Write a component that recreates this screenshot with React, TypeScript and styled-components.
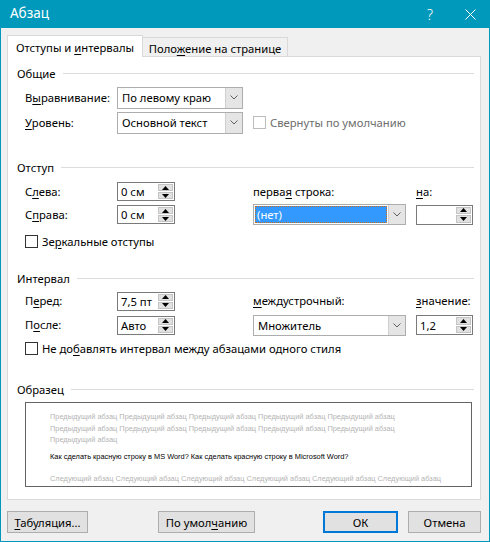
import React from 'react';
import styled, { createGlobalStyle } from 'styled-components';

const ACCENT = '#0099bc';

const Global = createGlobalStyle`
  html, body { margin: 0; padding: 0; background: #f0f0f0; }
  body {
    font-family: "Noto Sans", "Segoe UI", sans-serif;
    font-size: 11.25px;
    color: #000;
  }
  * { box-sizing: border-box; }
`;

/* ---------- window chrome ---------- */

const Window = styled.div`
  width: 490px;
  height: 542px;
  border: 1px solid ${ACCENT};
  border-top: none;
  background: #f0f0f0;
  display: flex;
  flex-direction: column;
`;

const TitleBar = styled.div`
  height: 28px;
  flex: none;
  background: ${ACCENT};
  color: #fff;
  display: flex;
  align-items: center;
  padding-left: 9px;
`;

const Title = styled.span`
  flex: 1;
  font-size: 13.5px;
  line-height: 1;
  padding-bottom: 1px;
`;

const CaptionButton = styled.span<{ $w: number }>`
  width: ${p => p.$w}px;
  height: 100%;
  display: flex;
  align-items: center;
  justify-content: center;
  color: #fff;
  font-size: 14px;
  font-weight: 300;
`;

/* ---------- tabs ---------- */

const TabStrip = styled.div`
  height: 28px;
  flex: none;
  display: flex;
  align-items: flex-end;
  padding-left: 6px;
`;

const Tab = styled.div<{ $active?: boolean; $w: number }>`
  position: relative;
  width: ${p => p.$w}px;
  height: ${p => (p.$active ? 22 : 19)}px;
  margin-bottom: ${p => (p.$active ? -1 : 0)}px;
  margin-left: ${p => (p.$active ? 0 : -1)}px;
  z-index: ${p => (p.$active ? 1 : 0)};
  background: ${p => (p.$active ? '#fff' : '#f0f0f0')};
  border: 1px solid #d9d9d9;
  border-bottom: none;
  display: flex;
  align-items: center;
  justify-content: center;
  padding-top: ${p => (p.$active ? 1 : 2)}px;
`;

const Text = styled.span`
  white-space: nowrap;
`;

const Panel = styled.div`
  margin: 0 8px 0 6px;
  height: 444px;
  flex: none;
  background: #fff;
  border: 1px solid #d9d9d9;
  padding: 8px 6px 0 9px;
`;

/* ---------- groups ---------- */

const GroupHeader = styled.div<{ $gap: number }>`
  display: flex;
  align-items: center;
  height: 16px;
  margin-top: ${p => p.$gap}px;
  white-space: nowrap;

  &::after {
    content: '';
    flex: 1;
    height: 1px;
    margin-left: 7px;
    background: #dcdcdc;
  }
`;

const Key = styled.span`
  text-decoration: underline;
  text-underline-offset: 2px;
  text-decoration-thickness: 1px;
`;

const GeneralGrid = styled.div`
  display: grid;
  grid-template-columns: 92px 126px 10px auto;
  grid-template-areas:
    "l1 c1 . ."
    "l2 c2 . x";
  grid-auto-rows: 25px;
  align-items: center;
  margin: 4px 0 0 8px;
`;

const FieldGrid = styled.div<{ $row: number; $gap: number }>`
  display: grid;
  grid-template-columns: 92px 58px 78px 153px 10px 57px;
  grid-template-areas:
    "l1 s1 . h1 . h2"
    "l2 s2 . c1 . c2";
  grid-auto-rows: ${p => p.$row}px;
  align-items: center;
  margin: ${p => p.$gap}px 0 0 8px;
`;

const Label = styled.span<{ $area: string }>`
  grid-area: ${p => p.$area};
  white-space: nowrap;
  line-height: 16px;
`;

const Slot = styled.div<{ $area: string }>`
  grid-area: ${p => p.$area};
  display: flex;
  align-items: center;
`;

/* ---------- combo box ---------- */

const Combo = styled.div<{ $w: number; $h: number }>`
  width: ${p => p.$w}px;
  height: ${p => p.$h}px;
  border: 1px solid #adadad;
  background: #fff;
  display: flex;
`;

const ComboValue = styled.span<{ $selected?: boolean }>`
  flex: 1;
  display: flex;
  align-items: center;
  padding-left: ${p => (p.$selected ? 2 : 4)}px;
  margin: ${p => (p.$selected ? '1px' : '0')};
  background: ${p => (p.$selected ? '#3399ff' : 'transparent')};
  color: ${p => (p.$selected ? '#fff' : '#000')};
  outline: ${p => (p.$selected ? '1px dotted #c46a1c' : 'none')};
  outline-offset: -1px;
  white-space: nowrap;
`;

const DropButton = styled.span`
  width: 17px;
  flex: none;
  background: #e5e5e5;
  border-left: 1px solid #cfcfcf;
  display: flex;
  align-items: center;
  justify-content: center;
`;

const Chevron = () => (
  <svg width="8" height="5" viewBox="0 0 8 5">
    <path d="M0.5 0.5 L4 4 L7.5 0.5" fill="none" stroke="#606060" strokeWidth="1" />
  </svg>
);

/* ---------- spin box ---------- */

const Spin = styled.div<{ $w: number; $h: number }>`
  width: ${p => p.$w}px;
  height: ${p => p.$h}px;
  border: 1px solid #7a7a7a;
  background: #fff;
  display: flex;
`;

const SpinValue = styled.span`
  flex: 1;
  display: flex;
  align-items: center;
  padding-left: 3px;
  white-space: nowrap;
`;

const SpinButtons = styled.div`
  width: 16px;
  flex: none;
  display: flex;
  flex-direction: column;
  gap: 1px;
  padding: 1px 1px 1px 0;
`;

const SpinArrow = styled.span`
  flex: 1;
  background: #e1e1e1;
  border: 1px solid #c4c4c4;
  display: flex;
  align-items: center;
  justify-content: center;
`;

const Triangle = ({ up }: { up?: boolean }) => (
  <svg width="7" height="4" viewBox="0 0 7 4">
    <path d={up ? 'M0 4 L3.5 0 L7 4 Z' : 'M0 0 L3.5 4 L7 0 Z'} fill="#000" />
  </svg>
);

const SpinBox = ({ value, w = 58, h = 19 }: { value: string; w?: number; h?: number }) => (
  <Spin $w={w} $h={h}>
    <SpinValue>{value}</SpinValue>
    <SpinButtons>
      <SpinArrow><Triangle up /></SpinArrow>
      <SpinArrow><Triangle /></SpinArrow>
    </SpinButtons>
  </Spin>
);

/* ---------- check box ---------- */

const CheckRow = styled.label<{ $gap: number; $disabled?: boolean }>`
  display: flex;
  align-items: center;
  gap: 4px;
  height: 16px;
  margin-top: ${p => p.$gap}px;
  color: ${p => (p.$disabled ? '#6d6d6d' : '#000')};
`;

const Box = styled.span<{ $disabled?: boolean }>`
  width: 13px;
  height: 13px;
  flex: none;
  background: #fff;
  border: 1px solid ${p => (p.$disabled ? '#bcbcbc' : '#333')};
`;

const IndentedCheck = styled(CheckRow)`
  margin-left: 8px;
`;

/* ---------- preview ---------- */

const Preview = styled.div`
  margin: 5px 0 0 8px;
  width: 447px;
  height: 85px;
  border: 1px solid #646464;
  overflow: hidden;
  padding: 8px 0 0 24px;
  font-family: "Liberation Sans", Arial, sans-serif;
  font-size: 7.4px;
`;

const PreviewPara = styled.div<{ $current?: boolean; $after: number }>`
  color: ${p => (p.$current ? '#000' : '#b4b4b4')};
  line-height: 11.5px;
  margin-bottom: ${p => p.$after}px;
  white-space: nowrap;
`;

/* ---------- footer ---------- */

const Footer = styled.div`
  display: flex;
  align-items: center;
  margin-top: 11px;
  padding: 0 8px 0 6px;
`;

const Button = styled.button<{ $w: number; $default?: boolean; $gap?: number }>`
  width: ${p => p.$w}px;
  height: 22px;
  margin-left: ${p => p.$gap ?? 0}px;
  background: #e1e1e1;
  border: ${p => (p.$default ? '2px solid #0078d7' : '1px solid #adadad')};
  font: inherit;
  color: #000;
  padding: 0;
  display: flex;
  align-items: center;
  justify-content: center;
`;

const Spacer = styled.span`
  flex: 1;
`;

const repeat = (s: string, n: number) => Array.from({ length: n }, () => s).join(' ');

export default function App() {
  return (
    <>
      <Global />
      <Window>
        <TitleBar>
          <Title>Абзац</Title>
          <CaptionButton $w={42}>?</CaptionButton>
          <CaptionButton $w={38}>
            <svg width="11" height="11" viewBox="0 0 11 11">
              <path d="M0.5 0.5 L10.5 10.5 M10.5 0.5 L0.5 10.5" stroke="#fff" strokeWidth="1" />
            </svg>
          </CaptionButton>
        </TitleBar>

        <TabStrip>
          <Tab $active $w={136}><Text>Отступы и <Key>и</Key>нтервалы</Text></Tab>
          <Tab $w={146}><Text>Поло<Key>ж</Key>ение на странице</Text></Tab>
        </TabStrip>

        <Panel>
          <GroupHeader $gap={0}>Общие</GroupHeader>
          <GeneralGrid>
            <Label $area="l1">В<Key>ы</Key>равнивание:</Label>
            <Slot $area="c1">
              <Combo $w={126} $h={22}>
                <ComboValue>По левому краю</ComboValue>
                <DropButton><Chevron /></DropButton>
              </Combo>
            </Slot>
            <Label $area="l2"><Key>У</Key>ровень:</Label>
            <Slot $area="c2">
              <Combo $w={126} $h={22}>
                <ComboValue>Основной текст</ComboValue>
                <DropButton><Chevron /></DropButton>
              </Combo>
            </Slot>
            <Slot $area="x">
              <CheckRow $gap={0} $disabled>
                <Box $disabled />
                <Text>Свернуты по умолчанию</Text>
              </CheckRow>
            </Slot>
          </GeneralGrid>

          <GroupHeader $gap={24}>Отступ</GroupHeader>
          <FieldGrid $row={23} $gap={5}>
            <Label $area="l1">С<Key>л</Key>ева:</Label>
            <Slot $area="s1"><SpinBox value="0 см" /></Slot>
            <Label $area="h1">перва<Key>я</Key> строка:</Label>
            <Label $area="h2"><Key>н</Key>а:</Label>
            <Label $area="l2">С<Key>п</Key>рава:</Label>
            <Slot $area="s2"><SpinBox value="0 см" /></Slot>
            <Slot $area="c1">
              <Combo $w={153} $h={21}>
                <ComboValue $selected>(нет)</ComboValue>
                <DropButton><Chevron /></DropButton>
              </Combo>
            </Slot>
            <Slot $area="c2"><SpinBox value="" w={57} h={20} /></Slot>
          </FieldGrid>
          <IndentedCheck $gap={7}>
            <Box />
            <Text>Зе<Key>р</Key>кальные отступы</Text>
          </IndentedCheck>

          <GroupHeader $gap={21}>Интервал</GroupHeader>
          <FieldGrid $row={24} $gap={3}>
            <Label $area="l1">П<Key>е</Key>ред:</Label>
            <Slot $area="s1"><SpinBox value="7,5 пт" /></Slot>
            <Label $area="h1"><Key>м</Key>еждустрочный:</Label>
            <Label $area="h2"><Key>з</Key>начение:</Label>
            <Label $area="l2">П<Key>о</Key>сле:</Label>
            <Slot $area="s2"><SpinBox value="Авто" /></Slot>
            <Slot $area="c1">
              <Combo $w={153} $h={21}>
                <ComboValue>Множитель</ComboValue>
                <DropButton><Chevron /></DropButton>
              </Combo>
            </Slot>
            <Slot $area="c2"><SpinBox value="1,2" w={57} h={20} /></Slot>
          </FieldGrid>
          <IndentedCheck $gap={3}>
            <Box />
            <Text>Не до<Key>б</Key>авлять интервал между абзацами одного стиля</Text>
          </IndentedCheck>

          <GroupHeader $gap={25}>Образец</GroupHeader>
          <Preview>
            <PreviewPara $after={5}>
              <div>{repeat('Предыдущий абзац', 5)}</div>
              <div>{repeat('Предыдущий абзац', 5)}</div>
              <div>Предыдущий абзац</div>
            </PreviewPara>
            <PreviewPara $current $after={11}>
              Как сделать красную строку в MS Word? Как сделать красную строку в Microsoft Word?
            </PreviewPara>
            <PreviewPara $after={0}>
              <div>{repeat('Следующий абзац', 6)}</div>
              <div>{repeat('Следующий абзац', 6)}</div>
            </PreviewPara>
          </Preview>
        </Panel>

        <Footer>
          <Button $w={81}><Text><Key>Т</Key>абуляция...</Text></Button>
          <Button $w={97} $gap={70}><Text>По умол<Key>ч</Key>анию</Text></Button>
          <Spacer />
          <Button $w={75} $default><Text>ОК</Text></Button>
          <Button $w={73} $gap={10}><Text>Отмена</Text></Button>
        </Footer>
      </Window>
    </>
  );
}
